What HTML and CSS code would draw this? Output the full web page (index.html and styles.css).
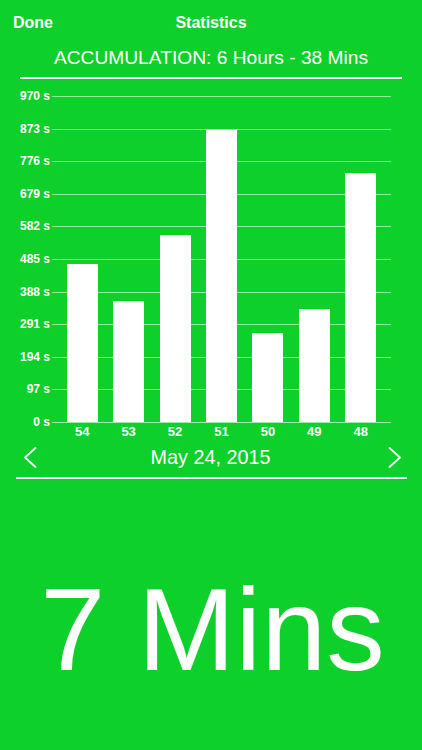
FILE: index.html
```html
<!DOCTYPE html>
<html>
<head>
<meta charset="utf-8">
<link rel="stylesheet" href="styles.css">
</head>
<body>
<div class="screen">
  <header class="navbar">
    <span class="nav-left">Done</span>
    <span class="nav-title">Statistics</span>
    <span></span>
  </header>

  <div class="accum">ACCUMULATION: 6 Hours - 38 Mins</div>
  <div class="rule rule-top"></div>

  <div class="chart">
    <div class="ylabels">
      <span>970 s</span><span>873 s</span><span>776 s</span><span>679 s</span><span>582 s</span><span>485 s</span><span>388 s</span><span>291 s</span><span>194 s</span><span>97 s</span><span>0 s</span>
    </div>
    <div class="plotcol">
      <div class="plot">
        <div class="gridlines">
          <div class="gl"></div><div class="gl"></div><div class="gl"></div><div class="gl"></div><div class="gl"></div>
          <div class="gl"></div><div class="gl"></div><div class="gl"></div><div class="gl"></div><div class="gl"></div>
        </div>
        <div class="bars">
          <div class="slot"><div class="bar" style="height:157.6px"></div></div>
          <div class="slot"><div class="bar" style="height:121.3px"></div></div>
          <div class="slot"><div class="bar" style="height:186.9px"></div></div>
          <div class="slot"><div class="bar" style="height:292px"></div></div>
          <div class="slot"><div class="bar" style="height:89.4px"></div></div>
          <div class="slot"><div class="bar" style="height:112.6px"></div></div>
          <div class="slot"><div class="bar" style="height:249px"></div></div>
        </div>
      </div>
      <div class="xlabels">
        <span>54</span><span>53</span><span>52</span><span>51</span><span>50</span><span>49</span><span>48</span>
      </div>
    </div>
  </div>

  <div class="daterow">
    <svg class="chev" width="14" height="21" viewBox="0 0 14 21"><polyline points="12.5,1 2,10.5 12.5,20" fill="none" stroke="#fff" stroke-width="1.8" stroke-linecap="round" stroke-linejoin="round"/></svg>
    <span class="date">May 24, 2015</span>
    <svg class="chev chev-right" width="14" height="21" viewBox="0 0 14 21"><polyline points="1.5,1 12,10.5 1.5,20" fill="none" stroke="#fff" stroke-width="1.8" stroke-linecap="round" stroke-linejoin="round"/></svg>
  </div>
  <div class="rule rule-date"></div>

  <div class="big">7 Mins</div>
</div>
</body>
</html>
```

FILE: styles.css
```css
html, body {
  margin: 0;
  padding: 0;
}
body {
  background: #0dd02b;
  color: #fff;
  font-family: "Liberation Sans", Arial, Helvetica, sans-serif;
}
.screen {
  width: 422px;
  height: 750px;
  overflow: hidden;
}
.navbar {
  height: 45px;
  display: grid;
  grid-template-columns: 1fr auto 1fr;
  align-items: center;
  padding: 0 13px;
  font-size: 16px;
  font-weight: bold;
  line-height: 20px;
}
.accum {
  margin-top: 2px;
  height: 22px;
  line-height: 22px;
  text-align: center;
  font-size: 19.2px;
}
.rule {
  height: 2px;
  background: #fff;
}
.rule-top {
  margin: 8px 20px 0 20px;
}
.chart {
  margin-top: 10px;
  display: grid;
  grid-template-columns: 52px 339px;
  align-items: start;
}
.ylabels {
  height: 340px;
  display: flex;
  flex-direction: column;
  justify-content: space-between;
  align-items: flex-end;
  padding-right: 2px;
  font-size: 12px;
  font-weight: bold;
}
.ylabels span {
  height: 14px;
  line-height: 14px;
}
.plotcol {
  padding-top: 7px;
}
.plot {
  display: grid;
}
.gridlines, .bars {
  grid-area: 1 / 1;
}
.gridlines {
  height: 327px;
  display: flex;
  flex-direction: column;
  border-bottom: 1px solid rgba(255,255,255,0.6);
  box-sizing: border-box;
}
.gl {
  flex: 1;
  border-top: 1px solid rgba(255,255,255,0.55);
}
.bars {
  height: 326px;
  display: flex;
  align-items: flex-end;
  padding: 0 7px;
}
.slot {
  flex: 1;
  display: flex;
  justify-content: center;
}
.bar {
  width: 31px;
  background: #fff;
}
.xlabels {
  margin-top: 1px;
  display: flex;
  padding: 0 7px;
  height: 16px;
  line-height: 16px;
  font-size: 13px;
  font-weight: bold;
}
.xlabels span {
  flex: 1;
  text-align: center;
}
.daterow {
  margin-top: 5px;
  height: 24px;
  display: grid;
  grid-template-columns: 1fr auto 1fr;
  align-items: center;
  padding: 0 20px 0 23px;
}
.chev {
  display: block;
}
.chev-right {
  justify-self: end;
}
.date {
  font-size: 19.8px;
  line-height: 24px;
  position: relative;
  left: -2px;
}
.rule-date {
  margin: 8px 15px 0 16px;
}
.big {
  margin-top: 86px;
  height: 130px;
  line-height: 130px;
  font-size: 117px;
  text-align: center;
  padding-left: 3px;
}
```
